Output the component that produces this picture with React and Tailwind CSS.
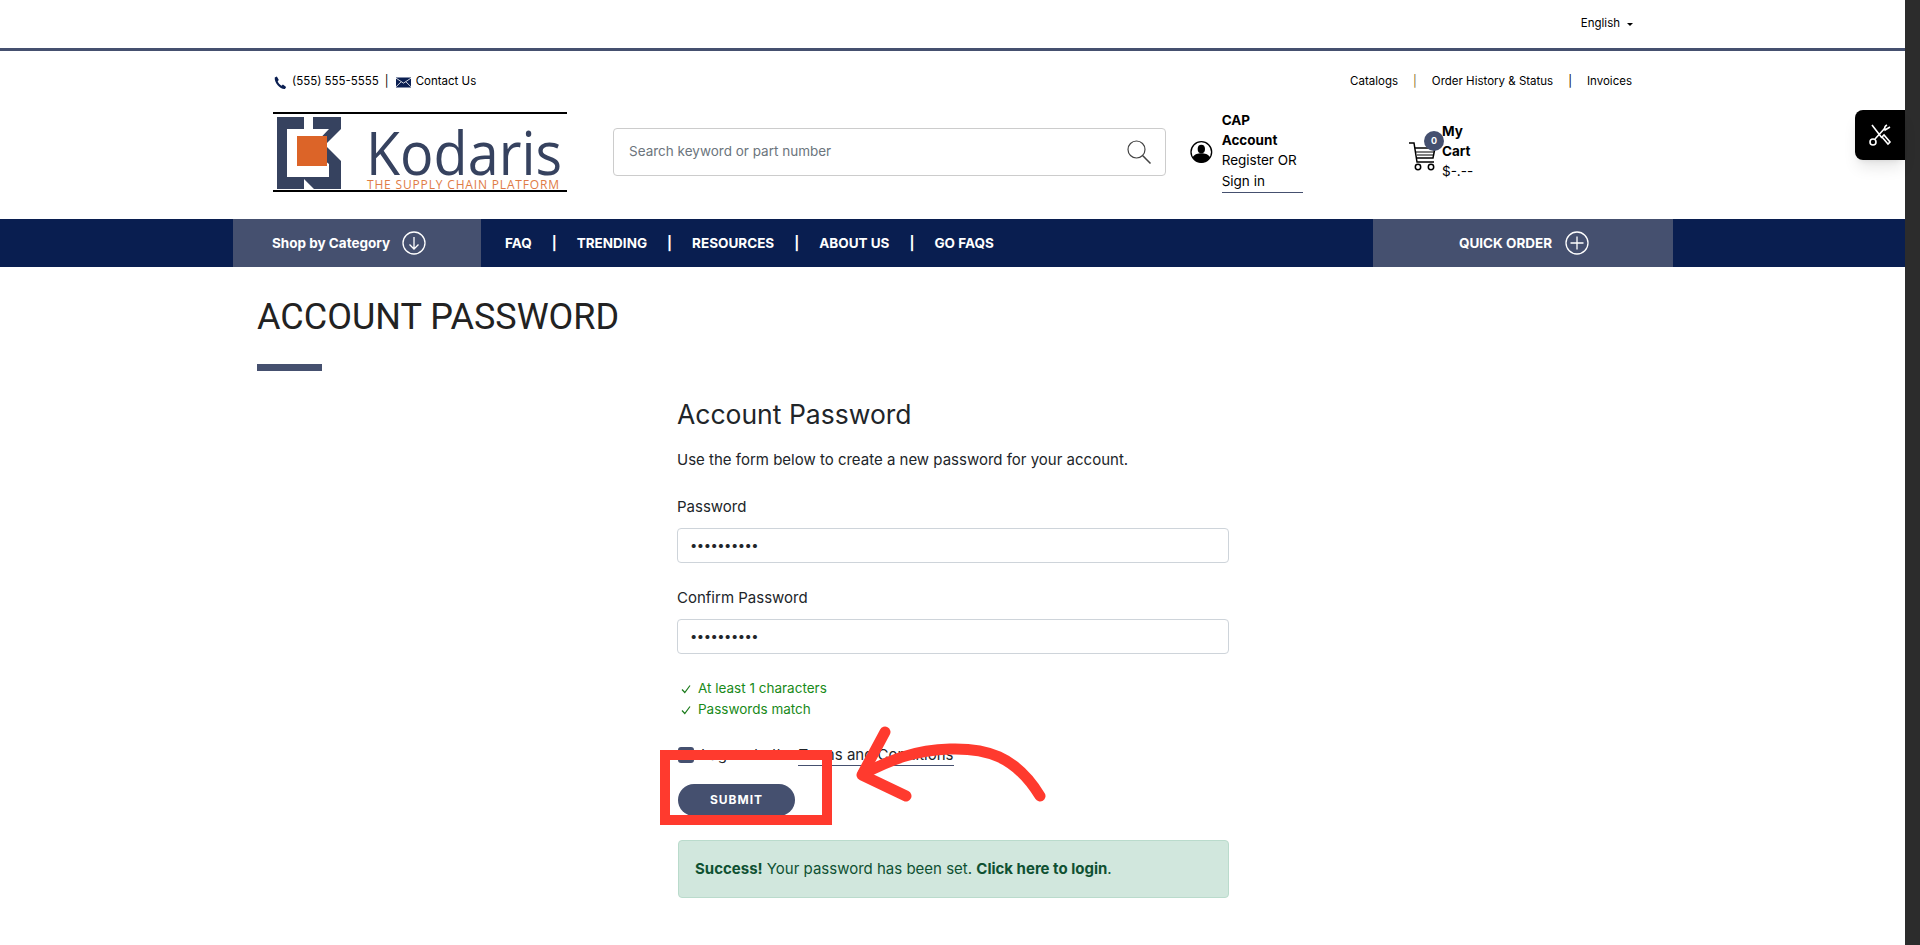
import React from "react";

const M = "font-['Inter','Liberation_Sans',sans-serif]";

function Logo() {
  return (
    <div className="w-[294px] h-[80px] border-y-2 border-black flex items-center relative">
      <svg width="294" height="76" viewBox="0 0 294 76">
        <path d="M4 3h27v12H14v48h17v12H4z M40 3h28v12L52 31 L68 47 v28H41L29 63h27V50L37 35 L56 15H40z" fill="#36425f" transform="translate(0,0)" />
        <rect x="24" y="22" width="30" height="30" fill="#dc6428" />
        <text x="93" y="61" fontFamily="'Open Sans','Noto Sans',sans-serif" fontSize="60" fill="#36425f" textLength="196" lengthAdjust="spacingAndGlyphs">Kodaris</text>
        <text x="94" y="75" fontFamily="'Open Sans','Noto Sans',sans-serif" fontSize="12" fontWeight="500" fill="#e07b45" textLength="192" lengthAdjust="spacing">THE SUPPLY CHAIN PLATFORM</text>
      </svg>
    </div>
  );
}

export default function App() {
  return (
    <div className={`h-[945px] w-[1920px] overflow-hidden bg-white relative flex ${M}`}>
      <div className="w-[1905px] shrink-0 relative">
        <div className="h-[51px] border-b-[3px] border-[#45506f] flex justify-end items-center pr-[272px] text-[11.5px] text-black">
          <span>English</span>
          <span className="ml-[7px] border-x-[3px] border-t-[3px] border-x-transparent border-t-black" />
        </div>
        <div className="h-[168px] px-[273px] pt-[22px]">
          <div className="flex justify-between text-[11.5px] text-black h-[18px] items-center">
            <div className="flex items-center">
              <svg width="14" height="15" viewBox="0 0 24 24" fill="#0b1f52" className="mr-[5px]"><path d="M6.6 1.5 10 7.5 8 10c1 3 3.500 6 6.500 7.500l2.500-2 5.500 4-2 3.500C13 24 2 13 3 3.500z" /></svg>
              <span>(555) 555-5555</span>
              <span className="mx-[6px]">|</span>
              <svg width="15" height="11" viewBox="0 0 24 16" className="mr-[5px] ml-[1px]"><rect width="24" height="16" fill="#0b1f52" /><path d="M0 1l12 8 12-8M0 15l8-8M24 15l-8-8" stroke="#fff" strokeWidth="1.300" fill="none" /></svg>
              <span>Contact Us</span>
            </div>
            <div className="flex items-center">
              <span>Catalogs</span>
              <span className="mx-[15px] text-[#8a6d1f]">|</span>
              <span>Order History &amp; Status</span>
              <span className="mx-[15px]">|</span>
              <span>Invoices</span>
            </div>
          </div>
          <div className="flex items-center mt-[19px]">
            <Logo />
            <div className="ml-[46px] w-[553px] h-[48px] border border-[#cccccc] rounded-[4px] flex items-center pl-[15px] pr-[13px] justify-between">
              <span className="text-[13.500px] text-[#6c757d]">Search keyword or part number</span>
              <svg width="26" height="26" viewBox="0 0 26 26" fill="none" stroke="#444" strokeWidth="1.200"><circle cx="10.500" cy="10.500" r="8.500" /><path d="M16.800 16.800 24.500 24.500" strokeWidth="1.600" /></svg>
            </div>
            <div className="ml-[24px] flex items-center w-[287px]">
              <svg width="34" height="34" viewBox="0 0 34 34">
                <circle cx="17" cy="17" r="15.500" fill="#fff" stroke="#000" strokeWidth="2" />
                <ellipse cx="17" cy="12.500" rx="5.500" ry="6.500" fill="#000" />
                <path d="M4 25c3-5 8-6 13-6s10 1 13 6c-3 5-8 8-13 8s-10-3-13-8z" fill="#000" />
              </svg>
              <div className="ml-[9px] flex flex-col">
                <span className="text-[13.500px] font-bold text-black leading-[20px]">CAP Account</span>
                <span className="text-[13.500px] text-black leading-[21px] border-b border-[#45506f]">Register OR Sign in</span>
              </div>
              <div className="relative ml-[105px] w-[30px] h-[34px]">
                <svg width="30" height="32" viewBox="0 0 30 32" fill="none" stroke="#000" strokeWidth="1.500" className="absolute left-0 top-[4px]">
                  <path d="M1 4h5l3 19h17" /><path d="M7 9h20l-2 10H9" /><path d="M8 13h18M9 16h16" strokeWidth="1" />
                  <circle cx="10" cy="28" r="2.700" /><circle cx="23" cy="28" r="2.700" />
                </svg>
                <span className="absolute left-[16px] top-[-4px] w-[20px] h-[20px] rounded-full bg-[#45506f] text-white text-[9px] font-bold flex items-center justify-center">0</span>
              </div>
              <div className="ml-[14px] flex flex-col">
                <span className="text-[13.500px] font-bold text-black leading-[20px]">My Cart</span>
                <span className="text-[13.500px] text-black leading-[21px]">$-.--</span>
              </div>
            </div>
          </div>
        </div>
        <nav className="h-[48px] bg-[#091e50] pl-[233px] flex items-center text-white font-bold text-[13.500px]">
          <div className="w-[248px] h-full bg-[#45506f] flex items-center pl-[39px]">
            <span>Shop by Category</span>
            <svg width="24" height="24" viewBox="0 0 24 24" fill="none" stroke="#fff" strokeWidth="1.300" className="ml-[12px]"><circle cx="12" cy="12" r="11" /><path d="M12 6v12M7.500 13.500 12 18l4.500-4.500" /></svg>
          </div>
          <div className="flex items-center ml-[24px]">
            <span>FAQ</span>
            <span className="mx-[20px]">|</span>
            <span>TRENDING</span>
            <span className="mx-[20px]">|</span>
            <span>RESOURCES</span>
            <span className="mx-[20px]">|</span>
            <span>ABOUT US</span>
            <span className="mx-[20px]">|</span>
            <span>GO FAQS</span>
          </div>
          <div className="ml-auto mr-[232px] w-[300px] h-full bg-[#45506f] flex items-center justify-center pl-[2px]">
            <span>QUICK ORDER</span>
            <svg width="24" height="24" viewBox="0 0 24 24" fill="none" stroke="#fff" strokeWidth="1.300" className="ml-[13px]"><circle cx="12" cy="12" r="11" /><path d="M12 5.500v13M5.500 12h13" /></svg>
          </div>
        </nav>
        <div className="pl-[257px]">
          <h1 className="mt-[25px] text-[36px] leading-[50px] text-[#222222] font-normal font-['Liberation_Sans_Narrow','Roboto',sans-serif]">ACCOUNT PASSWORD</h1>
          <div className="mt-[22px] w-[65px] h-[7px] bg-[#45506f]" />
        </div>
        <div className="ml-[677px] w-[552px] mt-[23px] text-[#212529]">
          <h2 className="text-[26.500px] leading-[40px] font-normal">Account Password</h2>
          <p className="mt-[14px] text-[15px] leading-[24px]">Use the form below to create a new password for your account.</p>
          <label className="block mt-[23px] text-[15px] leading-[24px]">Password</label>
          <div className="mt-[9px] h-[35px] border border-[#ced4da] rounded-[4px] flex items-center pl-[12px] text-[13px] tracking-[-0.5px] leading-none">••••••••••</div>
          <label className="block mt-[23px] text-[15px] leading-[24px]">Confirm Password</label>
          <div className="mt-[9px] h-[35px] border border-[#ced4da] rounded-[4px] flex items-center pl-[12px] text-[13px] tracking-[-0.5px] leading-none">••••••••••</div>
          <div className="mt-[24px] text-[13.500px] leading-[21px] text-[#198a19]">
            <div className="flex items-center pl-[4px]"><svg width="10" height="10" viewBox="0 0 10 10" fill="none" stroke="#1a7a1a" strokeWidth="1.200"><path d="M1 5.500 3.800 8.500 9 1.500" /></svg><span className="ml-[7px]">At least 1 characters</span></div>
            <div className="flex items-center pl-[4px]"><svg width="10" height="10" viewBox="0 0 10 10" fill="none" stroke="#1a7a1a" strokeWidth="1.200"><path d="M1 5.500 3.800 8.500 9 1.500" /></svg><span className="ml-[7px]">Passwords match</span></div>
          </div>
          <div className="mt-[23px] flex items-center text-[15px] leading-[24px]">
            <span className="ml-[1px] w-[16px] h-[16px] rounded-[3px] bg-[#45506f] flex items-center justify-center">
              <svg width="10" height="10" viewBox="0 0 10 10" fill="none" stroke="#fff" strokeWidth="2"><path d="M1.500 5.500 4 8 8.500 2" /></svg>
            </span>
            <span className="ml-[7px]">I agree to the</span>
            <span className="ml-[4px] border-b border-[#45506f] leading-[21px]">Terms and Conditions</span>
          </div>
          <button className="mt-[17px] ml-[1px] block w-[117px] h-[32px] rounded-full bg-[#45506f] text-white text-[12px] font-bold tracking-[1px]">SUBMIT</button>
          <div className="mt-[24px] ml-[1px] h-[58px] rounded-[4px] border border-[#badbcc] bg-[#d1e7dd] text-[#0f5132] text-[15px] flex items-center pl-[16px]">
            <span><b>Success!</b> Your password has been set. <b>Click here to login</b>.</span>
          </div>
        </div>
        <div className="absolute left-[660px] top-[750px] w-[172px] h-[75px] border-[10px] border-[#ff3a2e]" />
        <svg className="absolute left-[840px] top-[720px]" width="220" height="90" viewBox="840 720 220 90" fill="none" stroke="#ff3a2e" strokeWidth="11" strokeLinecap="round" strokeLinejoin="round">
          <path d="M1040 796C1015 755 985 748 950 749 915 750 890 760 863 774" />
          <path d="M885 732 862 775 906 796" />
        </svg>
        <div className="absolute right-0 top-[110px] w-[50px] h-[50px] bg-black rounded-l-[8px] flex items-center justify-center shadow-lg">
          <svg width="24" height="24" viewBox="0 0 24 24" fill="none" stroke="#fff" strokeWidth="1.600"><path d="M4 2l10 13M17 5 7 16" /><circle cx="5" cy="19" r="3" /><path d="M19 2c-2 1-3 3-2 5l5-3" /><path d="M14 14l6 7 2-2-6-7z" /></svg>
        </div>
      </div>
      <div className="w-[15px] h-full bg-[#2c2c2c]" />
    </div>
  );
}
